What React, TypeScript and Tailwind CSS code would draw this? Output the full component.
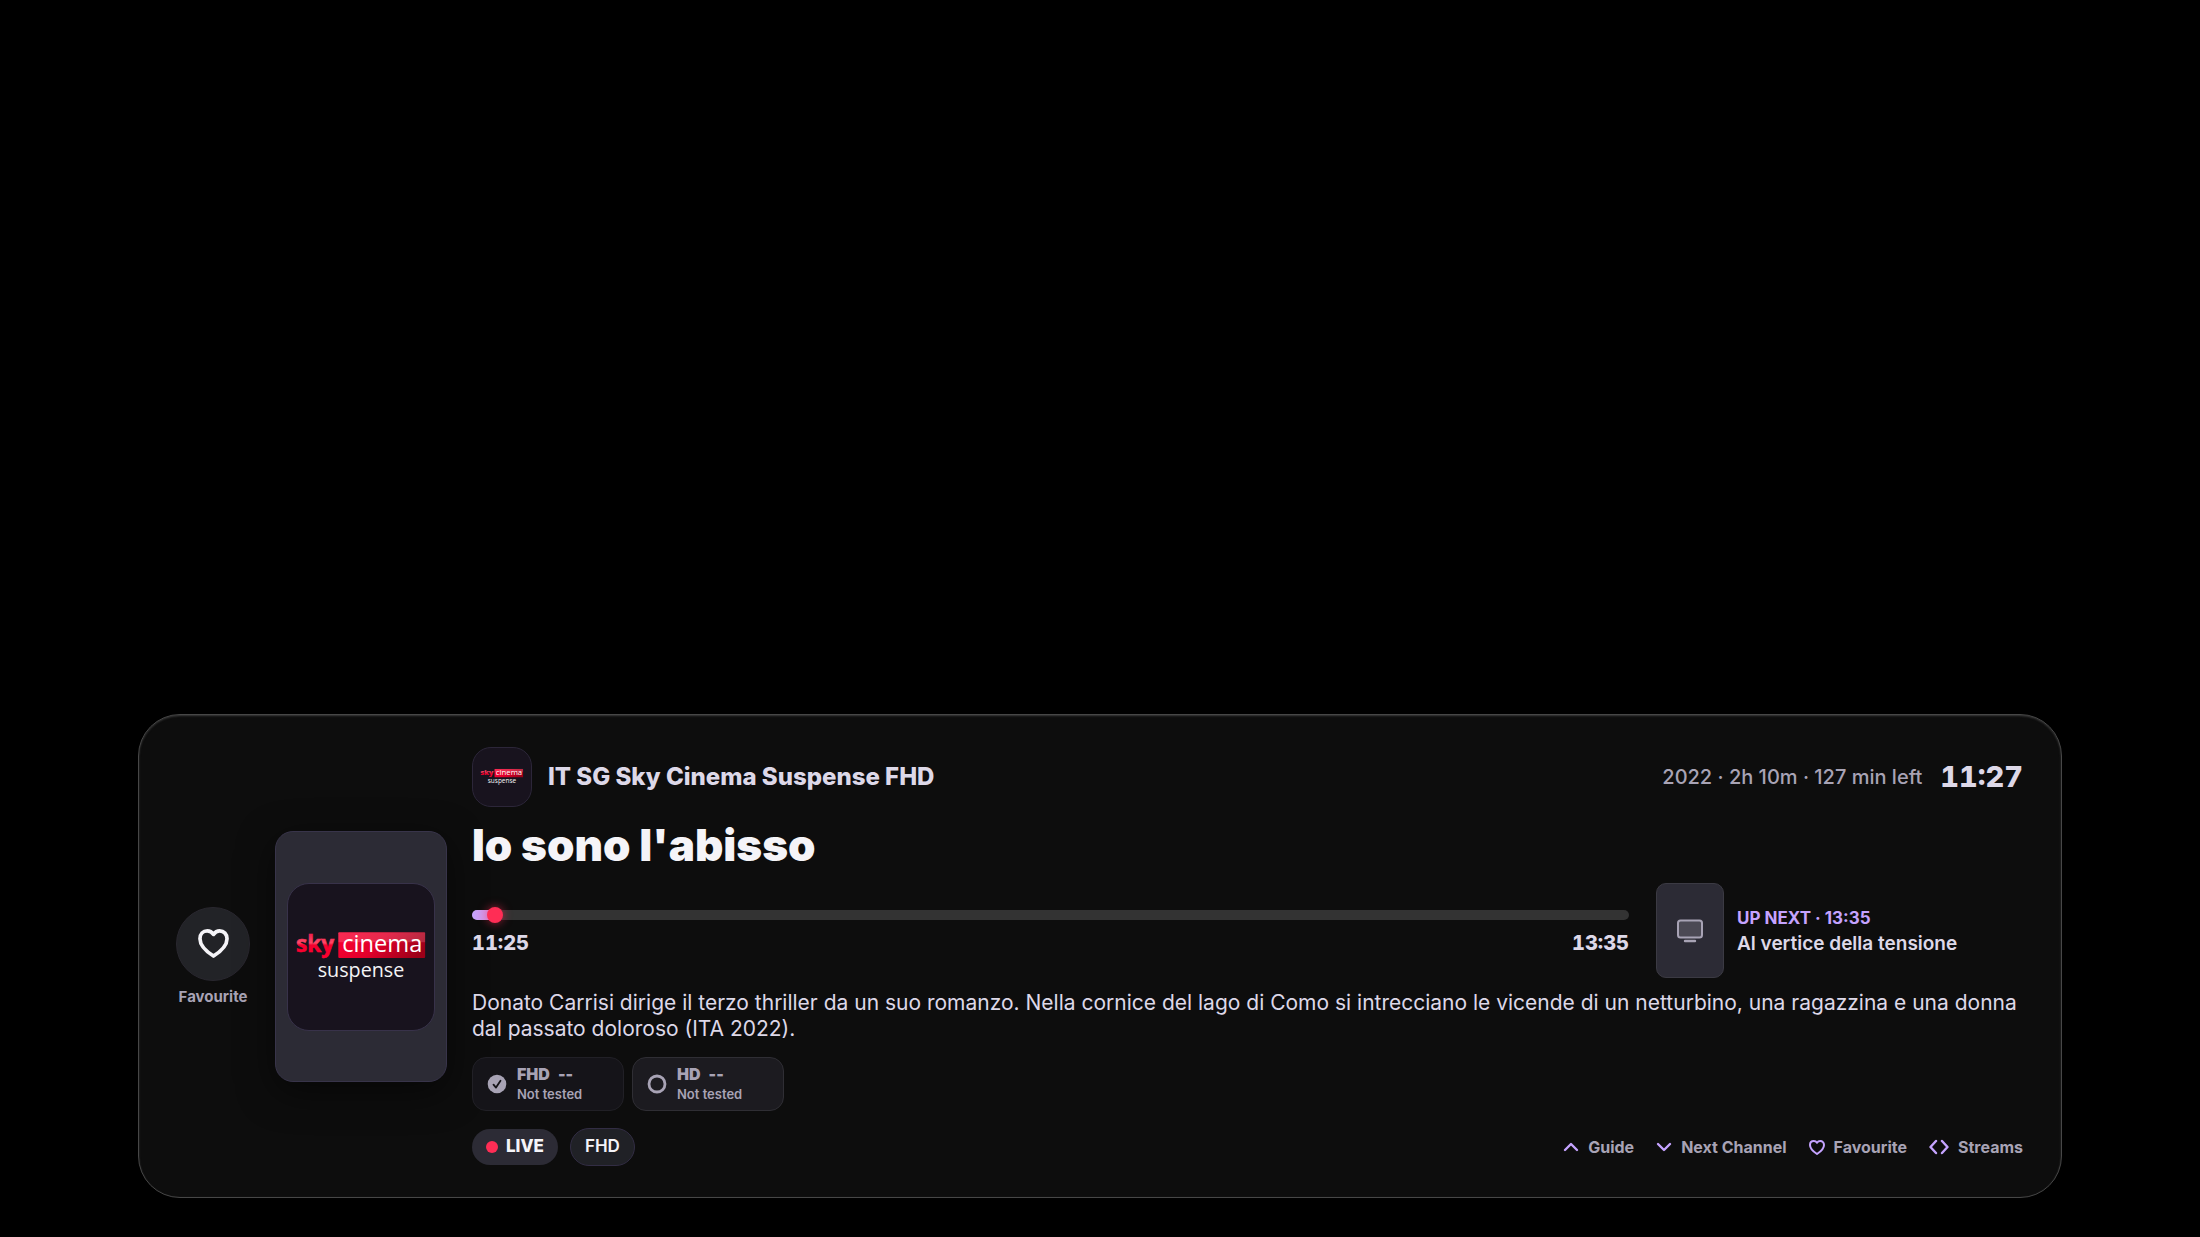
import React from "react";

function ChannelLogo({ id, className }: { id: string; className: string }) {
  return (
    <svg viewBox="0 0 148 148" className={className} role="img" aria-label="sky cinema suspense">
      <defs>
        <linearGradient id={`${id}-sky`} x1="0" y1="0" x2="0" y2="1">
          <stop offset="0" stopColor="#e8003a" />
          <stop offset="0.48" stopColor="#ff4a68" />
          <stop offset="0.55" stopColor="#f5002e" />
          <stop offset="1" stopColor="#ff0030" />
        </linearGradient>
        <linearGradient id={`${id}-box`} x1="0" y1="0.3" x2="1" y2="0.6">
          <stop offset="0" stopColor="#f80030" />
          <stop offset="0.45" stopColor="#e2002b" />
          <stop offset="1" stopColor="#9c0018" />
        </linearGradient>
      </defs>
      <text x="8" y="69" fill={`url(#${id}-sky)`} stroke={`url(#${id}-sky)`} strokeWidth="0.600" fontFamily='"Open Sans", sans-serif' fontSize="23" fontWeight="700">
        sky
      </text>
      <rect x="51" y="49" width="88" height="26" rx="1" fill={`url(#${id}-box)`} />
      <rect x="51" y="49" width="88" height="10" fill="#ffffff" fillOpacity="0.16" />
      <text x="55" y="69" fill="#ffffff" fontFamily='"Open Sans", sans-serif' fontSize="24">
        cinema
      </text>
      <text x="74" y="94" textAnchor="middle" fill="#f4f4f6" fontFamily='"Open Sans", sans-serif' fontSize="20">
        suspense
      </text>
    </svg>
  );
}

function HeartIcon({ className, stroke }: { className: string; stroke: number }) {
  return (
    <svg viewBox="0 0 32 30" className={className} fill="none" stroke="currentColor" strokeWidth={stroke} strokeLinejoin="round" aria-hidden="true">
      <path d="M16 5.6C14.4 3.2 12.2 2 9.6 2C5.2 2 2 5.400 2 10C2 16.500 7.500 22.500 16 28C24.500 22.500 30 16.500 30 10C30 5.400 26.800 2 22.400 2C19.800 2 17.600 3.200 16 5.600Z" />
    </svg>
  );
}

function TvIcon() {
  return (
    <svg viewBox="0 0 26 24" className="h-6 w-[26px] text-[#a8a3b5]" fill="none" stroke="currentColor" aria-hidden="true">
      <rect x="1" y="1.500" width="24" height="17" rx="2.500" strokeWidth="2" fill="#a8a3b5" fillOpacity="0.25" />
      <path d="M8 22H18" strokeWidth="2.400" strokeLinecap="round" />
    </svg>
  );
}

function StreamCard({ name, selected }: { name: string; selected?: boolean }) {
  return (
    <button
      className={
        selected
          ? "flex h-[54px] w-[152px] items-center gap-[10px] rounded-[14px] border border-[#212026] bg-[#151419] px-[14px] text-left text-[#a8a3b5]"
          : "flex h-[54px] w-[152px] items-center gap-[10px] rounded-[14px] border border-[#2f2e34] bg-[#1c1b20] px-[14px] text-left text-[#a8a3b5]"
      }
    >
      <svg viewBox="0 0 20 20" className="size-5 shrink-0" fill="none" aria-hidden="true">
        {selected ? (
          <>
            <circle cx="10" cy="10" r="9.300" fill="currentColor" />
            <path d="M6.500 10.700L9 13.600L13.500 6.800" stroke="#151419" strokeWidth="1.800" strokeLinecap="round" strokeLinejoin="round" />
          </>
        ) : (
          <circle cx="10" cy="10" r="8" stroke="currentColor" strokeWidth="2.800" />
        )}
      </svg>
      <span className="flex flex-col">
        <span className="flex gap-2 text-base leading-5 font-black">
          <span>{name}</span>
          <span>--</span>
        </span>
        <span className="text-[13px] leading-5 font-semibold">Not tested</span>
      </span>
    </button>
  );
}

function Hint({ label, children }: { label: string; children: React.ReactNode }) {
  return (
    <button className="flex items-center gap-[9px] text-base leading-5 font-bold text-[#a8a3b5]">
      <span className="text-[#c5a3ff]">{children}</span>
      {label}
    </button>
  );
}

export default function App() {
  return (
    <main className="flex min-h-screen flex-col justify-end bg-black px-[138px] pb-[39px] font-['Inter',sans-serif] text-[#ddd8e8]">
      <section className="flex items-center gap-[25px] rounded-[42px] border border-[#474747] bg-[#0d0d0d] pt-8 pr-[38px] pb-[31px] pl-[37px] shadow-[inset_0_1px_2px_#3a3a3a]">
        <button className="flex w-[74px] shrink-0 flex-col items-center gap-2 pb-[2px]">
          <span className="flex size-[74px] items-center justify-center rounded-full border border-[#29272f] bg-[#222327] text-[#f5f4f8]">
            <HeartIcon className="h-[29px] w-[31px]" stroke={3.8} />
          </span>
          <span className="text-[15px] leading-4 font-bold text-[#a8a3b5]">Favourite</span>
        </button>

        <div className="flex h-[251px] w-[172px] shrink-0 items-center justify-center rounded-[18px] border border-[#38344a] bg-[#2c2b35] shadow-[0_10px_36px_rgba(0,0,0,0.5)]">
          <div className="rounded-[22px] border border-[#38324a] bg-[#18131e]">
            <ChannelLogo id="poster" className="size-[146px]" />
          </div>
        </div>

        <div className="flex min-w-0 flex-1 flex-col">
          <header className="flex items-center gap-4">
            <div className="flex size-[60px] shrink-0 items-center justify-center rounded-[19px] border border-[#2c2639] bg-[#18131e]">
              <ChannelLogo id="channel" className="size-12" />
            </div>
            <h2 className="flex-1 text-2xl leading-8 font-extrabold">IT SG Sky Cinema Suspense FHD</h2>
            <div className="flex items-center gap-[18px]">
              <p className="text-[20px] leading-6 font-medium text-[#a8a3b5]">2022 · 2h 10m · 127 min left</p>
              <time className="text-[29px] leading-8 font-extrabold tabular-nums">11:27</time>
            </div>
          </header>

          <h1 className="mt-3 text-[44px] leading-[52px] font-black text-[#f5f4f8]">Io sono l'abisso</h1>

          <div className="mt-3 flex items-start gap-[27px]">
            <div className="flex-1 pt-[27px]">
              <div className="relative h-[10px] rounded-full bg-[#333333]" role="progressbar" aria-label="Programme progress" aria-valuemin={0} aria-valuemax={100} aria-valuenow={2}>
                <div className="h-full w-[2%] rounded-full bg-linear-to-r from-[#c5a3ff] to-[#d98cd8]" />
                <span className="absolute top-1/2 left-[2%] size-4 -translate-x-1/2 -translate-y-1/2 rounded-full bg-[#ff2d55] shadow-[0_0_10px_rgba(255,45,85,0.6)]" />
              </div>
              <div className="mt-[10px] flex justify-between text-[20px] leading-[26px] font-extrabold tabular-nums">
                <time>11:25</time>
                <time>13:35</time>
              </div>
            </div>
            <div className="flex w-[367px] items-center gap-[13px]">
              <div className="flex h-[95px] w-[68px] shrink-0 items-center justify-center rounded-[10px] border border-[#3b3a43] bg-[#2c2b35]">
                <TvIcon />
              </div>
              <div>
                <p className="text-[17px] leading-[26px] font-bold text-[#c5a3ff]">UP NEXT · 13:35</p>
                <p className="text-[19px] leading-[26px] font-semibold">Al vertice della tensione</p>
              </div>
            </div>
          </div>

          <p className="mt-3 text-[21px] leading-[26px]">
            Donato Carrisi dirige il terzo thriller da un suo romanzo. Nella cornice del lago di Como si intrecciano le vicende di un netturbino, una ragazzina e una donna dal passato doloroso (ITA 2022).
          </p>

          <div className="mt-[15px] flex gap-2">
            <StreamCard name="FHD" selected />
            <StreamCard name="HD" />
          </div>

          <footer className="mt-[17px] flex items-center justify-between">
            <div className="flex items-center gap-3">
              <span className="flex h-9 items-center gap-2 rounded-full bg-[#2c2b35] px-[14px] text-[17px] font-extrabold text-[#f5f4f8]">
                <span className="size-3 rounded-full bg-[#ff2d55]" />
                LIVE
              </span>
              <span className="flex h-[38px] items-center rounded-full border border-[#322d44] bg-[#202126] px-[14px] text-[17px] font-semibold text-[#f5f4f8]">FHD</span>
            </div>
            <nav className="flex items-center gap-[22px]">
              <Hint label="Guide">
                <svg viewBox="0 0 16 16" className="size-4" fill="none" stroke="currentColor" strokeWidth="2.400" strokeLinecap="round" strokeLinejoin="round" aria-hidden="true">
                  <path d="M2 11L8 5L14 11" />
                </svg>
              </Hint>
              <Hint label="Next Channel">
                <svg viewBox="0 0 16 16" className="size-4" fill="none" stroke="currentColor" strokeWidth="2.400" strokeLinecap="round" strokeLinejoin="round" aria-hidden="true">
                  <path d="M2 5L8 11L14 5" />
                </svg>
              </Hint>
              <Hint label="Favourite">
                <HeartIcon className="h-[15px] w-4" stroke={4} />
              </Hint>
              <Hint label="Streams">
                <svg viewBox="0 0 20 16" className="h-4 w-5" fill="none" stroke="currentColor" strokeWidth="2.400" strokeLinecap="round" strokeLinejoin="round" aria-hidden="true">
                  <path d="M7 2L1.500 8L7 14M13 2L18.500 8L13 14" />
                </svg>
              </Hint>
            </nav>
          </footer>
        </div>
      </section>
    </main>
  );
}
